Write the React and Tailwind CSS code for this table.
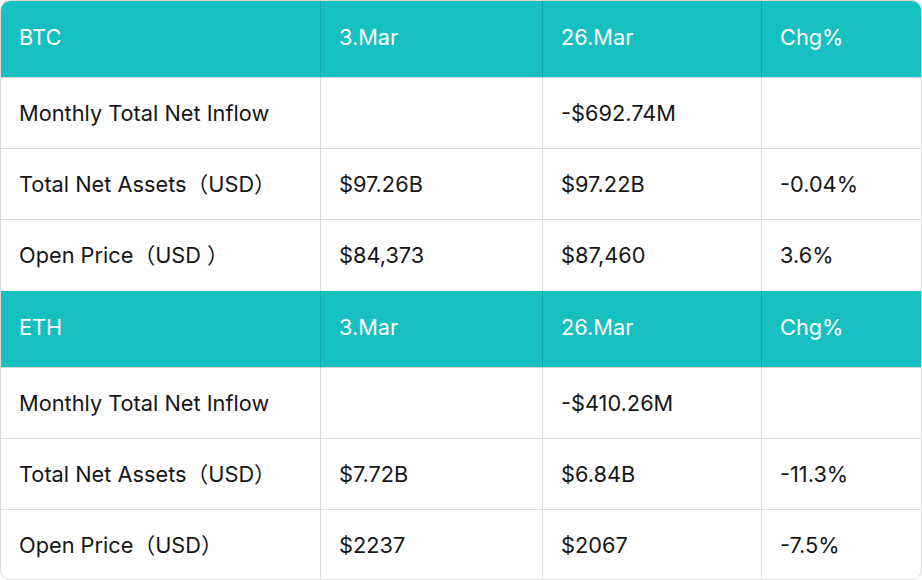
const SECTIONS = [
  {
    coin: 'BTC',
    rows: [
      ['Monthly Total Net Inflow', '', '-$692.74M', ''],
      ['Total Net Assets（USD）', '$97.26B', '$97.22B', '-0.04%'],
      ['Open Price（USD ）', '$84,373', '$87,460', '3.6%'],
    ],
  },
  {
    coin: 'ETH',
    rows: [
      ['Monthly Total Net Inflow', '', '-$410.26M', ''],
      ['Total Net Assets（USD）', '$7.72B', '$6.84B', '-11.3%'],
      ['Open Price（USD）', '$2237', '$2067', '-7.5%'],
    ],
  },
]

const font = { fontFamily: 'Inter, "Noto Sans CJK SC", sans-serif' }

export default function App() {
  return (
    <div className="w-[922px] h-[580px] bg-white" style={font}>
      <div className="w-full h-full rounded-[10px] border border-[#dcdcdc] overflow-hidden">
        <div className="grid grid-cols-[320px_222px_219px_1fr]">
          {SECTIONS.map((sec, si) => (
            <Section key={si} sec={sec} />
          ))}
        </div>
      </div>
    </div>
  )
}

function Section({ sec }) {
  const head = [sec.coin, '3.Mar', '26.Mar', 'Chg%']
  return (
    <>
      {head.map((h, i) => (
        <div
          key={'h' + i}
          className={`h-[77px] bg-[#17c0c0] text-white text-[21.75px] flex items-center pl-[18px] pb-[4px] border-b border-[#d8d8d8] ${i < 3 ? 'border-r border-r-[#11a9a9]' : ''}`}
        >
          {h}
        </div>
      ))}
      {sec.rows.map((row, ri) =>
        row.map((c, ci) => (
          <div
            key={ri + '-' + ci}
            className={`h-[71px] text-[#161616] text-[21.75px] flex items-center pl-[18px] border-[#dcdcdc] ${ci < 3 ? 'border-r' : ''} ${ri < 2 ? 'border-b' : ''}`}
          >
            {c}
          </div>
        ))
      )}
    </>
  )
}
